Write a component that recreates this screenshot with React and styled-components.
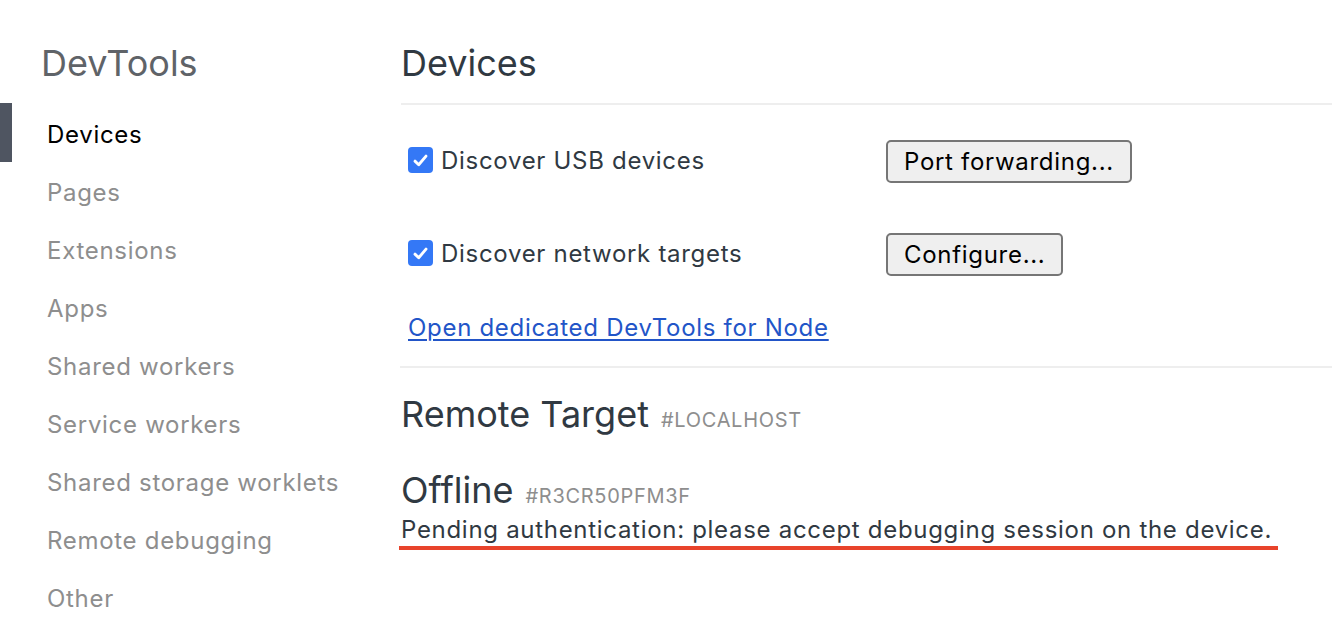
import React from 'react';
import styled, { createGlobalStyle } from 'styled-components';

const GlobalStyle = createGlobalStyle`
  body {
    margin: 0;
    background: #ffffff;
    font-family: Inter, "Noto Sans", sans-serif;
  }
`;

const Page = styled.div`
  display: flex;
  width: 1332px;
  height: 642px;
  overflow: hidden;
`;

const Sidebar = styled.nav`
  width: 400px;
  flex-shrink: 0;
  padding-top: 41px;
`;

const SideTitle = styled.h1`
  margin: 0 0 21px 41px;
  font-size: 36px;
  font-weight: 400;
  line-height: 44px;
  color: #5f6368;
`;

const NavList = styled.ul`
  list-style: none;
  margin: 0;
  padding: 0;
`;

const NavItem = styled.li`
  position: relative;
  height: 58px;
  line-height: 58px;
  padding-left: 47px;
  font-size: 24px;
  letter-spacing: 0.7px;
  color: ${(p) => (p.$active ? '#000000' : '#8e8e8e')};

  &::before {
    content: '';
    display: ${(p) => (p.$active ? 'block' : 'none')};
    position: absolute;
    left: 0;
    top: -3px;
    width: 12px;
    height: 59px;
    background: #4f5561;
  }
`;

const Main = styled.main`
  flex: 1;
  padding-top: 41px;
`;

const Header = styled.h2`
  margin: 0 0 0 1px;
  font-size: 36px;
  font-weight: 400;
  line-height: 44px;
  color: #303942;
  padding-bottom: 18px;
  border-bottom: 2px solid #eeeeee;
`;

const Section = styled.section`
  padding: 35px 0 0 8px;
  display: flex;
  flex-direction: column;
`;

const OptionRow = styled.div`
  display: flex;
  align-items: center;
  height: 43px;
  margin-bottom: ${(p) => p.$gap || 0}px;
`;

const Label = styled.label`
  width: 478px;
  display: flex;
  align-items: center;
  gap: 8px;
  font-size: 24px;
  letter-spacing: 0.7px;
  color: #303942;
  margin-top: -3px;
`;

const Check = styled.span`
  width: 25px;
  height: 26px;
  border-radius: 4px;
  background: #3478f6;
  display: flex;
  align-items: center;
  justify-content: center;
`;

const Button = styled.button`
  height: 43px;
  padding: 0 16px;
  font-family: Inter, "Noto Sans", sans-serif;
  font-size: 24px;
  letter-spacing: 0.7px;
  color: #000;
  background: #efefef;
  border: 2px solid #767676;
  border-radius: 5px;
`;

const LinkRow = styled.div`
  margin-top: 37px;
  line-height: 29px;
`;

const NodeLink = styled.a`
  font-size: 24px;
  letter-spacing: 0.7px;
  color: #2255c8;
  text-decoration: underline;
  text-underline-offset: 3px;
`;

const Divider = styled.hr`
  margin: 21px 0 0;
  border: none;
  border-top: 2px solid #eeeeee;
`;

const Target = styled.div`
  padding: 24px 0 0 1px;
`;

const TargetTitle = styled.div`
  display: flex;
  align-items: baseline;
  gap: 12px;
  font-size: 36px;
  line-height: 44px;
  color: #303942;
  margin-bottom: ${(p) => p.$gap || 0}px;
`;

const Tag = styled.span`
  font-size: 20px;
  letter-spacing: 0.7px;
  color: #8e8e8e;
  text-transform: uppercase;
`;

const Pending = styled.div`
  display: inline-block;
  margin-top: -3px;
  font-size: 24px;
  letter-spacing: 0.7px;
  line-height: 30px;
  color: #303942;
  padding: 0 6px 1px 2px;
  margin-left: -2px;
  border-bottom: 4px solid #e8432b;
`;

const CheckIcon = () => (
  <svg width="17" height="17" viewBox="0 0 16 16">
    <path d="M2.8 8.6 L6.3 12 L13.2 3.9" fill="none" stroke="#fff" strokeWidth="2.7" strokeLinecap="round" strokeLinejoin="round" />
  </svg>
);

const navItems = [
  'Devices',
  'Pages',
  'Extensions',
  'Apps',
  'Shared workers',
  'Service workers',
  'Shared storage worklets',
  'Remote debugging',
  'Other',
];

export default function App() {
  return (
    <Page>
      <GlobalStyle />
      <Sidebar>
        <SideTitle>DevTools</SideTitle>
        <NavList>
          {navItems.map((item, i) => (
            <NavItem key={item} $active={i === 0}>
              {item}
            </NavItem>
          ))}
        </NavList>
      </Sidebar>
      <Main>
        <Header>Devices</Header>
        <Section>
          <OptionRow $gap={50}>
            <Label>
              <Check><CheckIcon /></Check>
              Discover USB devices
            </Label>
            <Button>Port forwarding...</Button>
          </OptionRow>
          <OptionRow>
            <Label>
              <Check><CheckIcon /></Check>
              Discover network targets
            </Label>
            <Button>Configure...</Button>
          </OptionRow>
          <LinkRow>
            <NodeLink href="#">Open dedicated DevTools for Node</NodeLink>
          </LinkRow>
        </Section>
        <Divider />
        <Target>
          <TargetTitle $gap={26}>
            Remote Target <Tag>#localhost</Tag>
          </TargetTitle>
          <TargetTitle>
            Offline <Tag>#R3CR50PFM3F</Tag>
          </TargetTitle>
          <Pending>Pending authentication: please accept debugging session on the device.</Pending>
        </Target>
      </Main>
    </Page>
  );
}
